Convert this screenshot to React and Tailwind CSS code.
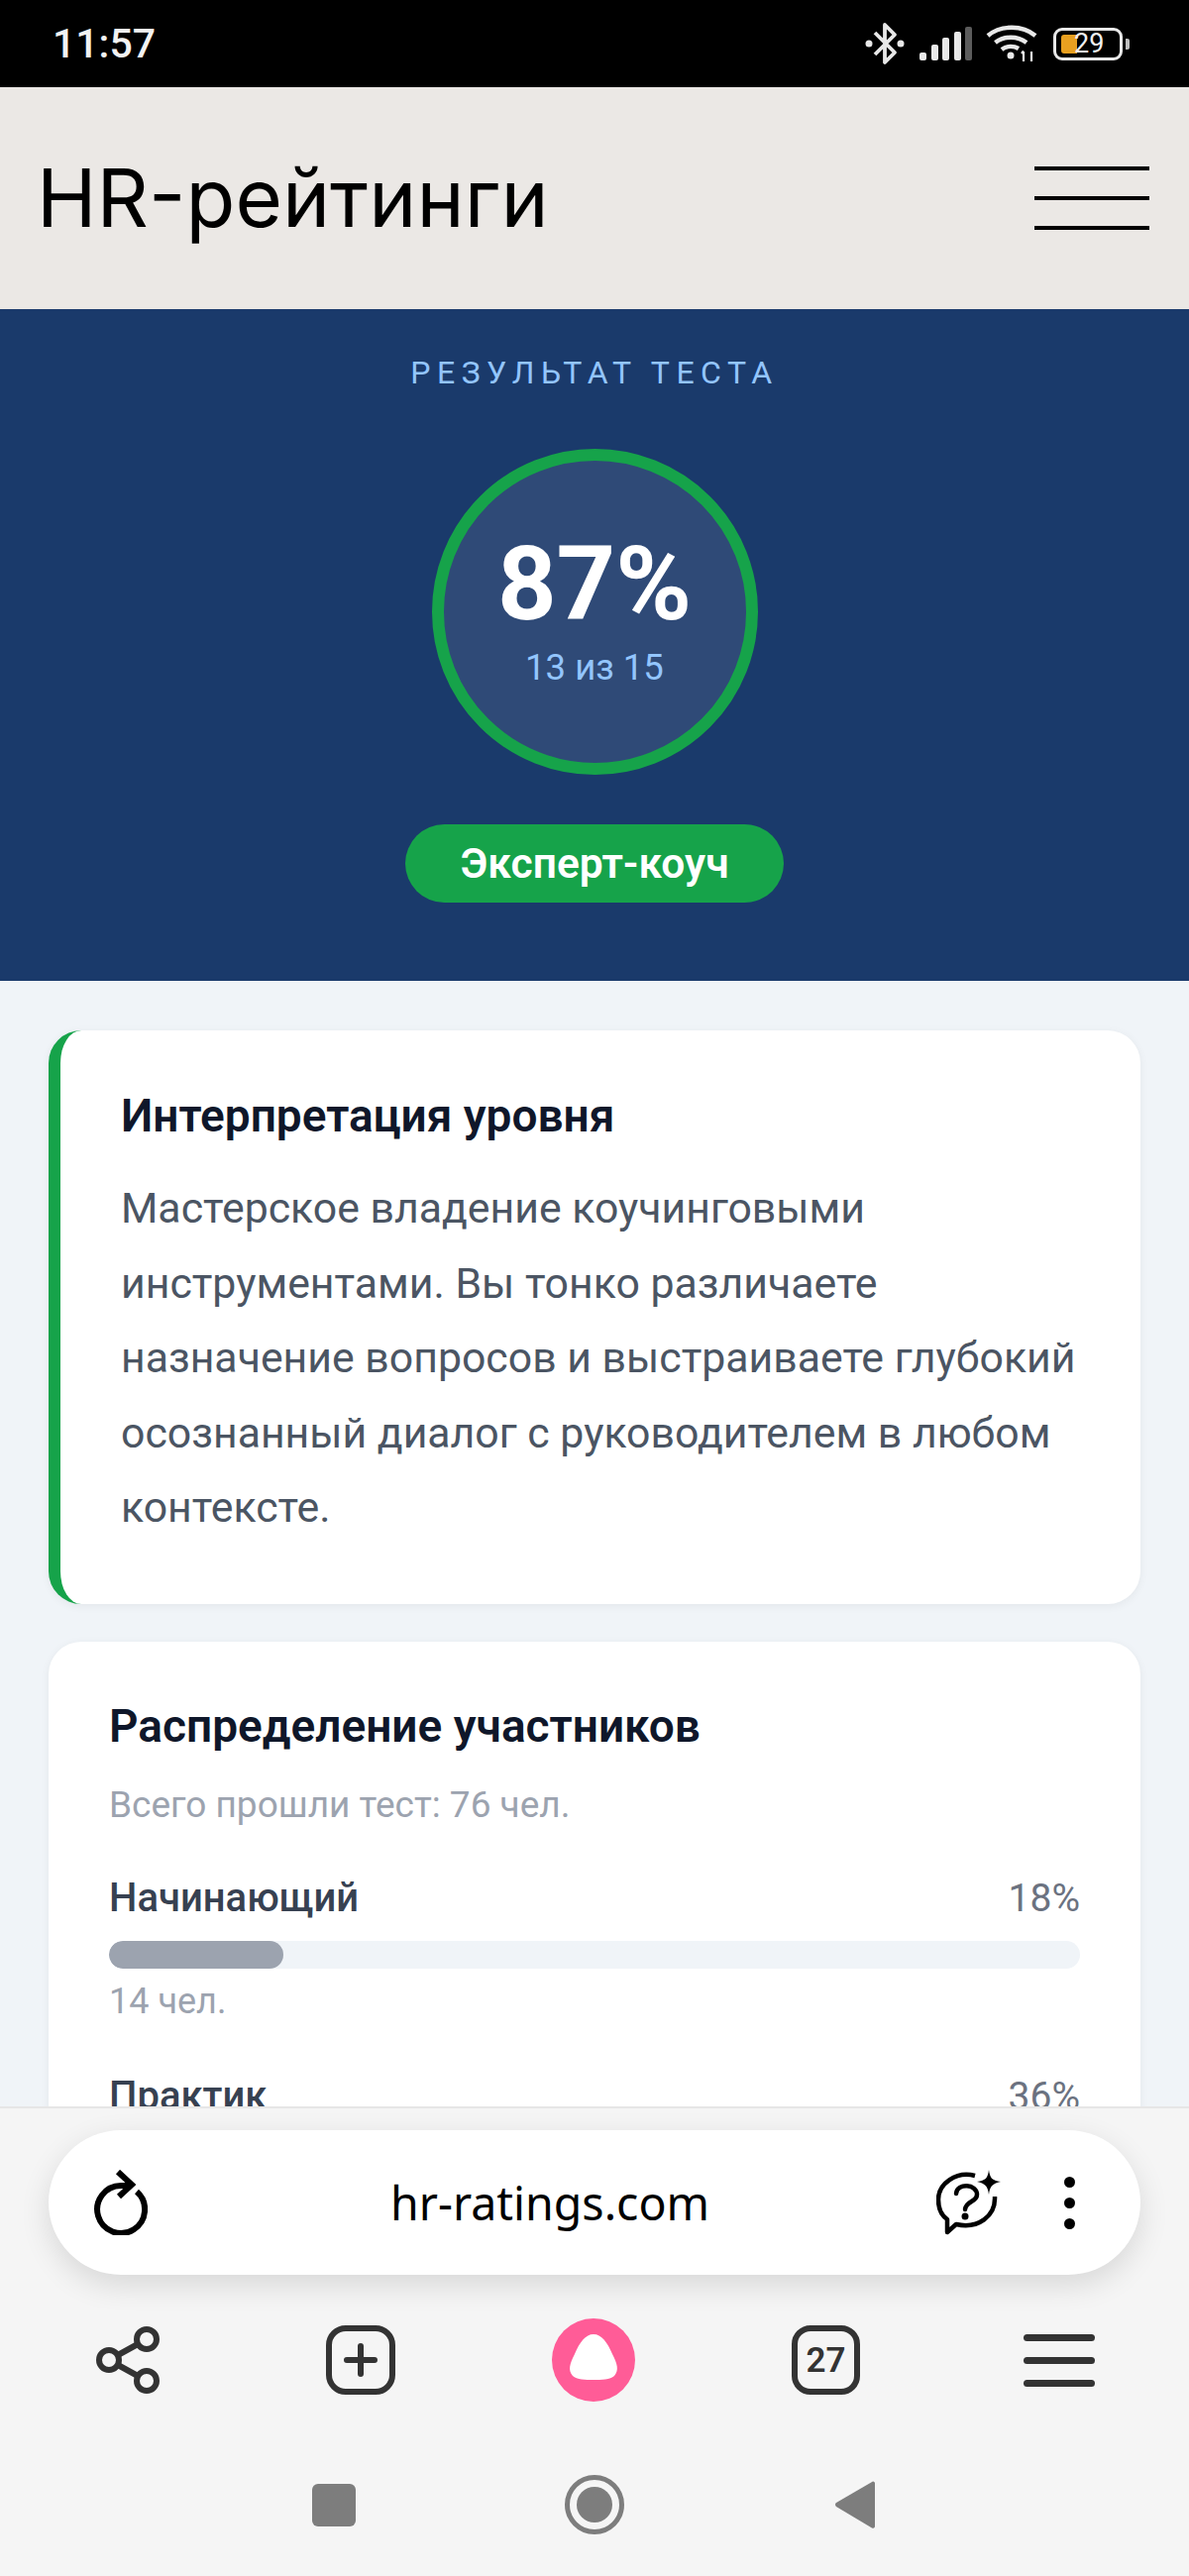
const roboto = { fontFamily: 'Roboto, "Liberation Sans", sans-serif' };

function Bluetooth() {
  return (
    <svg width="40" height="44" viewBox="0 0 40 44" fill="none" stroke="#e8e8e8" strokeWidth="3.8">
      <path d="M10 11 L30 31 L20 41 V3 L30 13 L10 33" strokeLinejoin="round" />
      <circle cx="4" cy="22" r="3.500" fill="#e8e8e8" stroke="none" />
      <circle cx="36" cy="22" r="3.500" fill="#e8e8e8" stroke="none" />
    </svg>
  );
}

function Signal() {
  return (
    <svg width="53" height="34" viewBox="0 0 53 34">
      <rect x="0" y="26" width="7" height="8" rx="2" fill="#e8e8e8" />
      <rect x="12" y="18" width="7" height="16" rx="2" fill="#e8e8e8" />
      <rect x="23" y="11" width="7" height="23" rx="2" fill="#e8e8e8" />
      <rect x="35" y="5" width="7" height="29" rx="2" fill="#e8e8e8" />
      <rect x="46" y="0" width="7" height="34" rx="2" fill="#5c5c5c" />
    </svg>
  );
}

function Wifi() {
  return (
    <svg width="52" height="38" viewBox="0 0 52 38" fill="none" stroke="#e8e8e8" strokeWidth="4.4">
      <path d="M2 11 C15 0 37 0 50 11" />
      <path d="M9.500 18 C18 11 32 11 41 18" />
      <path d="M16 25 C21 21 28 21 33 24" />
      <circle cx="25" cy="31" r="3.500" fill="#e8e8e8" stroke="none" />
      <path d="M38 37 V27 M36 29 L38 26.500 M46 27 V37" strokeWidth="2.200" />
    </svg>
  );
}

function Battery() {
  return (
    <div className="flex items-center gap-[3px]">
      <div className="relative flex h-[33px] w-[70px] items-center rounded-[9px] border-[3px] border-[#e8e8e8] pl-[5px]">
        <div className="h-[19px] w-[16px] rounded-l-[3px] bg-[#e8a020]" />
        <span className="absolute left-[18px] text-[27px] leading-[27px] text-[#f0f0f0]" style={roboto}>29</span>
      </div>
      <div className="h-[11px] w-[4px] rounded-r-[2px] bg-[#bdbdbd]" />
    </div>
  );
}

function RowHead({ label, pct }) {
  return (
    <div className="flex items-center justify-between">
      <span className="text-[40px] font-medium leading-[44px] text-[#374151]">{label}</span>
      <span className="text-[39px] leading-[44px] text-[#6b7280]">{pct}</span>
    </div>
  );
}

function Reload() {
  return (
    <svg width="54" height="66" viewBox="0 0 54 66" fill="none" stroke="#000" strokeWidth="6">
      <path d="M43 22 A24 24 0 1 1 27 16 L34 16" />
      <path d="M24 2 L38 15 L25 27" />
    </svg>
  );
}

function ChatSpark() {
  return (
    <svg width="65" height="66" viewBox="0 0 65 66" fill="none" stroke="#000" strokeWidth="4.500">
      <path d="M39 6 C20 1 2 14 2 30 C2 39 5 46 11 50 L11 63 L20 55 C42 60 60 47 59 27" strokeLinejoin="round" />
      <path d="M20 24 C21 13 41 14 41 25 C41 33 30 31 29 40" strokeLinecap="round" />
      <circle cx="29" cy="47" r="3.500" fill="#000" stroke="none" />
      <path d="M53 0 C54 8 56 11 65 12 C56 14 54 17 53 25 C52 17 50 14 41 12 C50 11 52 8 53 0 Z" fill="#000" stroke="none" />
    </svg>
  );
}

function Share() {
  return (
    <svg width="64" height="68" viewBox="0 0 64 68" fill="none" stroke="#333" strokeWidth="6">
      <circle cx="13" cy="34" r="10" />
      <circle cx="51" cy="13" r="10" />
      <circle cx="51" cy="55" r="10" />
      <path d="M22 29 L42 18 M22 39 L42 50" />
    </svg>
  );
}

function PlusBox() {
  return (
    <svg width="70" height="70" viewBox="0 0 70 70" fill="none" stroke="#333" strokeWidth="6">
      <rect x="3" y="3" width="64" height="64" rx="17" />
      <path d="M35 21 V49 M21 35 H49" strokeLinecap="round" />
    </svg>
  );
}

function Alice() {
  return (
    <svg width="84" height="84" viewBox="0 0 84 84">
      <circle cx="42" cy="42" r="42" fill="#ff5c97" />
      <path d="M42 16 C50 16 56 24 61 36 C66 46 68 52 63 58 C59 62 50 62 42 62 C34 62 25 62 21 58 C16 52 18 46 23 36 C28 24 34 16 42 16 Z" fill="#fff" />
    </svg>
  );
}

function Tabs() {
  return (
    <div className="flex h-[70px] w-[69px] items-center justify-center rounded-[19px] border-[6px] border-[#333] text-[35px] font-semibold leading-none text-[#333]" style={roboto}>
      27
    </div>
  );
}

function Menu() {
  return (
    <div className="flex w-[72px] flex-col gap-[16px]">
      <div className="h-[7px] rounded-full bg-[#333]" />
      <div className="h-[7px] rounded-full bg-[#333]" />
      <div className="h-[7px] rounded-full bg-[#333]" />
    </div>
  );
}

export default function App() {
  return (
    <div className="flex h-[2600px] w-[1200px] flex-col overflow-hidden bg-[#f0f4f8]" style={roboto}>
      <div className="flex h-[88px] shrink-0 items-center justify-between bg-black pl-[53px] pr-[60px]">
        <span className="text-[41px] font-medium leading-none text-[#f2f2f2]">11:57</span>
        <div className="flex items-center">
          <Bluetooth />
          <div className="ml-[15px]"><Signal /></div>
          <div className="ml-[14px]"><Wifi /></div>
          <div className="ml-[16px]"><Battery /></div>
        </div>
      </div>

      <header className="flex h-[224px] shrink-0 items-center justify-between bg-[#ebe8e5] pl-[37px] pr-[40px]">
        <span className="text-[81.5px] font-normal leading-none text-black" style={{ fontFamily: 'Inter, sans-serif' }}>HR-рейтинги</span>
        <div className="flex w-[116px] flex-col gap-[26px]">
          <div className="h-[4px] bg-black" />
          <div className="h-[4px] bg-black" />
          <div className="h-[4px] bg-black" />
        </div>
      </header>

      <section className="flex h-[678px] shrink-0 flex-col items-center bg-[#1a3a6b] pt-[44px]">
        <div className="text-[32px] leading-[40px] tracking-[6.5px] text-[#93c5fd]">РЕЗУЛЬТАТ ТЕСТА</div>
        <div className="mt-[57px] flex h-[329px] w-[329px] flex-col items-center justify-center rounded-full border-[12px] border-[#16a34a] bg-[#2f4a77] pb-[5px]">
          <div className="text-[104px] font-bold leading-[110px] text-white">87%</div>
          <div className="mt-[7px] text-[36.5px] leading-[44px] text-[#93c5fd]">13 из 15</div>
        </div>
        <div className="mt-[50px] flex h-[79px] w-[382px] items-center justify-center rounded-full bg-[#16a34a] text-[42.5px] font-semibold text-white">
          Эксперт-коуч
        </div>
      </section>

      <main className="min-h-0 flex-1 overflow-hidden px-[49px] pt-[50px]">
        <div className="rounded-[33px] border-l-[12px] border-[#16a34a] bg-white pb-[59px] pl-[61px] pr-[42px] pt-[59px] shadow-[0_2px_10px_rgba(0,0,0,0.06)]">
          <h2 className="text-[46px] font-semibold leading-[54px] text-[#0f172a]">Интерпретация уровня</h2>
          <p className="mt-[29px] text-[42.8px] leading-[75.6px] text-[#4b5563]">
            Мастерское владение коучинговыми инструментами. Вы тонко различаете назначение вопросов и выстраиваете глубокий осознанный диалог с руководителем в любом контексте.
          </p>
        </div>
        <div className="mt-[38px] rounded-[33px] bg-white px-[61px] pb-[40px] pt-[58px] shadow-[0_2px_10px_rgba(0,0,0,0.06)]">
          <h2 className="text-[46px] font-semibold leading-[54px] text-[#0f172a]">Распределение участников</h2>
          <div className="mt-[31px] text-[37px] leading-[44px] text-[#9ca3af]">Всего прошли тест: 76 чел.</div>
          <div className="mt-[50px]">
            <RowHead label="Начинающий" pct="18%" />
            <div className="mt-[21px] h-[28px] overflow-hidden rounded-full bg-[#f0f4f8]">
              <div className="h-full rounded-full bg-[#9ca3af]" style={{ width: '18%' }} />
            </div>
            <div className="mt-[11px] text-[36px] leading-[44px] text-[#9ca3af]">14 чел.</div>
          </div>
          <div className="mt-[52px]">
            <RowHead label="Практик" pct="36%" />
          </div>
        </div>
      </main>

      <footer className="flex h-[474px] shrink-0 flex-col border-t-2 border-[#e6e6e6] bg-[#f5f5f5]">
        <div className="mx-[49px] mt-[22px] flex h-[146px] items-center rounded-full bg-white pl-[46px] pr-[66px] shadow-[0_10px_30px_rgba(0,0,0,0.12)]">
          <Reload />
          <span className="flex-1 pl-[16px] text-center text-[46.5px] leading-none text-black" style={{ fontFamily: '"Noto Sans", sans-serif' }}>hr-ratings.com</span>
          <ChatSpark />
          <div className="ml-[64px] flex flex-col gap-[10px]">
            <div className="h-[11px] w-[11px] rounded-full bg-black" />
            <div className="h-[11px] w-[11px] rounded-full bg-black" />
            <div className="h-[11px] w-[11px] rounded-full bg-black" />
          </div>
        </div>
        <div className="mt-[44px] grid grid-cols-[repeat(5,235px)] items-center justify-items-center pl-[11px]">
          <Share />
          <PlusBox />
          <Alice />
          <Tabs />
          <Menu />
        </div>
        <div className="mt-[74px] flex items-center justify-center gap-[203px]">
          <div className="flex w-[60px] justify-center"><div className="h-[43px] w-[44px] rounded-[6px] bg-[#7d7d7d]" /></div>
          <div className="flex h-[60px] w-[60px] items-center justify-center rounded-full border-[5px] border-[#7d7d7d]">
            <div className="h-[36px] w-[36px] rounded-full bg-[#7d7d7d]" />
          </div>
          <div className="flex w-[60px] justify-center">
            <svg width="40" height="50" viewBox="0 0 40 50"><path d="M38 1.500 A2 2 0 0 1 40 3 V47 A2 2 0 0 1 37 48.500 L1 27 A2.500 2.500 0 0 1 1 23 Z" fill="#7d7d7d" /></svg>
          </div>
        </div>
      </footer>
    </div>
  );
}
